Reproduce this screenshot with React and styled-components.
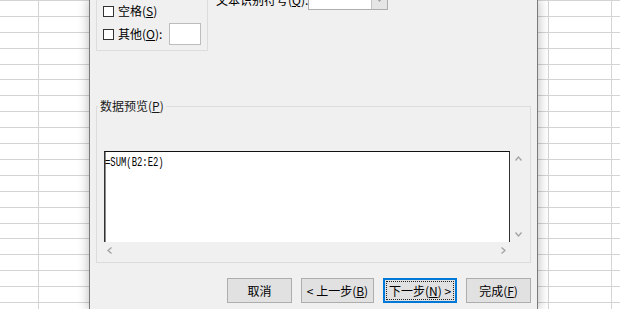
import React from "react";
import styled, { createGlobalStyle, css } from "styled-components";

const GlobalStyle = createGlobalStyle`
  html, body {
    margin: 0;
    padding: 0;
    height: 100%;
    overflow: hidden;
    background: #fff;
  }
  body {
    font-family: "Noto Sans CJK SC", "Liberation Sans", sans-serif;
    font-size: 12px;
    color: #000;
  }
  #root {
    height: 100%;
  }
`;

const gridLines = (cols) => {
  const lines = cols.map(() => "linear-gradient(#d4d4d4, #d4d4d4)");
  const sizes = cols.map(() => "1px 100%");
  const places = cols.map((x) => `${x}px 0`);
  return css`
    background-color: #fff;
    background-image: ${[...lines, "repeating-linear-gradient(to bottom, #d4d4d4 0 1px, transparent 1px 15.9px)"].join(", ")};
    background-size: ${[...sizes, "100% 100%"].join(", ")};
    background-position: ${[...places, "0 0"].join(", ")};
    background-repeat: no-repeat;
  `;
};

const Screen = styled.div`
  display: flex;
  height: 309px;
  overflow: hidden;
`;

const Sheet = styled.div`
  flex: ${(p) => (p.$width ? `0 0 ${p.$width}px` : "1")};
  height: 100%;
  ${(p) => gridLines(p.$cols)}
`;

const Dialog = styled.div`
  position: relative;
  z-index: 1;
  flex: 0 0 449px;
  box-sizing: border-box;
  height: 309px;
  padding: 0 6px;
  background: #f0f0f0;
  border-left: 1px solid #7a7a7a;
  border-right: 1px solid #7a7a7a;
  box-shadow: 0 0 10px 1px rgba(0, 0, 0, 0.25);
  display: flex;
  flex-direction: column;
  overflow: hidden;
`;

const TopRow = styled.div`
  display: flex;
  align-items: flex-start;
  gap: 8px;
  margin-top: -9px;
`;

const Delimiters = styled.div`
  width: 112px;
  box-sizing: border-box;
  border: 1px solid #dcdcdc;
  padding: 8px 6px 5px 6px;
  display: flex;
  flex-direction: column;
  gap: 1px;
`;

const CheckRow = styled.label`
  display: flex;
  align-items: center;
  gap: 4px;
  height: 22px;
  white-space: nowrap;
  line-height: 16px;
`;

const CheckBox = styled.span`
  flex: 0 0 11px;
  width: 11px;
  height: 11px;
  box-sizing: border-box;
  border: 1px solid #333;
  background: #fff;
`;

const OtherInput = styled.span`
  margin-left: auto;
  width: 32px;
  height: 22px;
  box-sizing: border-box;
  border: 1px solid #bdbdbd;
  background: #fff;
`;

const Qualifier = styled.div`
  width: 172px;
  margin-top: -2px;
`;

const QualifierRow = styled.div`
  display: flex;
  align-items: center;
  justify-content: space-between;
  height: 21px;
  white-space: nowrap;
`;

const Combo = styled.div`
  width: 81px;
  height: 21px;
  box-sizing: border-box;
  border: 1px solid #adadad;
  background: #fff;
  display: flex;
  justify-content: flex-end;
`;

const ComboButton = styled.div`
  width: 15px;
  background: #e5e5e5;
  border-left: 1px solid #c4c4c4;
  display: flex;
  align-items: center;
  justify-content: center;
`;

const Preview = styled.fieldset`
  margin: 47px 0 0 0;
  padding: 0 3px 3px 7px;
  border: 1px solid #dcdcdc;
  min-width: 0;
`;

const Caption = styled.legend`
  margin-left: -6px;
  padding: 0 2px;
  line-height: 16px;
  color: #1a1a1a;
`;

const PreviewBox = styled.div`
  margin-top: 37px;
  height: 108px;
  display: grid;
  grid-template-columns: 1fr 17px;
  grid-template-rows: 1fr 17px;
`;

const Client = styled.div`
  background: #fff;
  border-top: 1px solid #111;
  border-left: 1px solid #333;
  border-right: 1px solid #333;
  box-shadow: inset 1px 0 0 #8a8a8a;
  overflow: hidden;
`;

const Formula = styled.span`
  display: inline-block;
  font-family: "Liberation Mono", "DejaVu Sans Mono", monospace;
  font-size: 12px;
  line-height: 14px;
  transform: scaleX(0.74);
  transform-origin: left center;
  white-space: pre;
`;

const VScroll = styled.div`
  display: flex;
  flex-direction: column;
  align-items: center;
  justify-content: space-between;
  padding: 5px 0 5px;
`;

const HScroll = styled.div`
  display: flex;
  align-items: center;
  justify-content: space-between;
  padding: 0 4px 0 3px;
`;

const ButtonRow = styled.div`
  display: flex;
  justify-content: flex-end;
  gap: 9px;
  margin-top: 15px;
`;

const Button = styled.button`
  position: relative;
  width: ${(p) => p.$width}px;
  height: 25px;
  padding: 0;
  box-sizing: border-box;
  background: #e1e1e1;
  border: 1px solid #adadad;
  font-family: inherit;
  font-size: 12px;
  color: #000;
  white-space: nowrap;
  ${(p) =>
    p.$default &&
    css`
      border-color: #0078d7;
      box-shadow: inset 0 0 0 1px #0078d7;
      &::after {
        content: "";
        position: absolute;
        inset: 2px 2px;
        border: 1px dotted #222;
      }
    `}
`;

const Chevron = ({ dir }) => {
  const pts = {
    up: "0.5,4.5 3.5,1 6.5,4.5",
    down: "0.5,0.5 3.5,4 6.5,0.5",
    left: "4.5,0.5 1,3.5 4.5,6.5",
    right: "0.5,0.5 4,3.5 0.5,6.5",
  }[dir];
  const wide = dir === "up" || dir === "down";
  return (
    <svg width={wide ? 7 : 5} height={wide ? 5 : 7} viewBox={wide ? "0 0 7 5" : "0 0 5 7"}>
      <polyline points={pts} fill="none" stroke="#a3a3a3" strokeWidth="1.3" />
    </svg>
  );
};

const Check = ({ children }) => (
  <CheckRow>
    <CheckBox />
    <span>{children}</span>
  </CheckRow>
);

export default function App() {
  return (
    <>
      <GlobalStyle />
      <Screen>
        <Sheet $width={89} $cols={[38]} />
        <Dialog>
          <TopRow>
            <Delimiters>
              <Check>
                空格(<u>S</u>)
              </Check>
              <CheckRow>
                <CheckBox />
                <span>
                  其他(<u>O</u>):
                </span>
                <OtherInput />
              </CheckRow>
            </Delimiters>
            <Qualifier>
              <QualifierRow>
                <span>
                  文本识别符号(<u>Q</u>):
                </span>
                <Combo>
                  <ComboButton>
                    <Chevron dir="down" />
                  </ComboButton>
                </Combo>
              </QualifierRow>
            </Qualifier>
          </TopRow>

          <Preview>
            <Caption>
              数据预览(<u>P</u>)
            </Caption>
            <PreviewBox>
              <Client>
                <Formula>=SUM(B2:E2)</Formula>
              </Client>
              <VScroll>
                <Chevron dir="up" />
                <Chevron dir="down" />
              </VScroll>
              <HScroll>
                <Chevron dir="left" />
                <Chevron dir="right" />
              </HScroll>
            </PreviewBox>
          </Preview>

          <ButtonRow>
            <Button $width={65}>取消</Button>
            <Button $width={73}>
              &lt; 上一步(<u>B</u>)
            </Button>
            <Button $width={74} $default>
              下一步(<u>N</u>) &gt;
            </Button>
            <Button $width={65}>
              完成(<u>F</u>)
            </Button>
          </ButtonRow>
        </Dialog>
        <Sheet $cols={[10, 73]} />
      </Screen>
    </>
  );
}
